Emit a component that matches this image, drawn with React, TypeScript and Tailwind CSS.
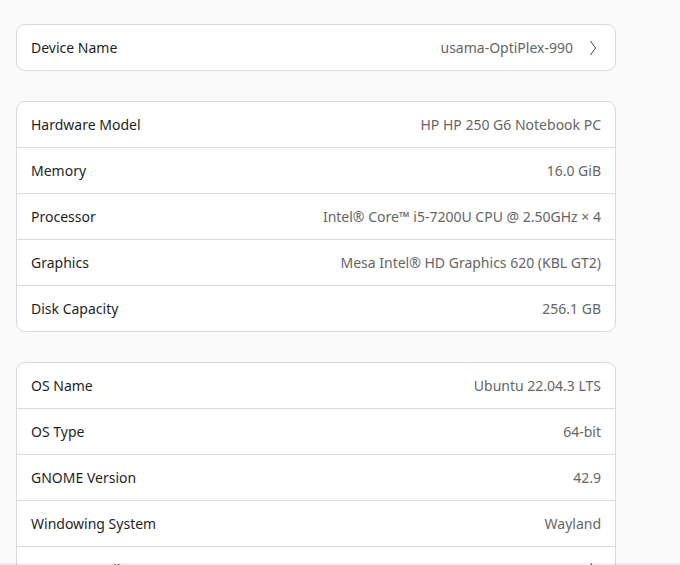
const hardware = [
  ["Hardware Model", "HP HP 250 G6 Notebook PC"],
  ["Memory", "16.0 GiB"],
  ["Processor", "Intel® Core™ i5-7200U CPU @ 2.50GHz × 4"],
  ["Graphics", "Mesa Intel® HD Graphics 620 (KBL GT2)"],
  ["Disk Capacity", "256.1 GB"],
];

const software = [
  ["OS Name", "Ubuntu 22.04.3 LTS"],
  ["OS Type", "64-bit"],
  ["GNOME Version", "42.9"],
  ["Windowing System", "Wayland"],
];

function Chevron() {
  return (
    <svg width="8" height="16" viewBox="0 0 8 16" fill="none" className="text-[#4a4a4a]">
      <path d="M1.5 1 L6.5 8 L1.5 15" stroke="currentColor" strokeWidth="1" />
    </svg>
  );
}

function Row({ label, value, chevron }: { label: string; value?: string; chevron?: boolean }) {
  return (
    <div
      className={`box-content flex h-[45px] items-center justify-between border-t border-[#dadada] pl-[14px] first:border-t-0 ${
        chevron ? "pr-[18px]" : "pr-[14px]"
      }`}
    >
      <span className="text-[#1f1f1f]">{label}</span>
      <div className="flex items-center gap-[16px]">
        {value && <span className="text-[#666666]">{value}</span>}
        {chevron && <Chevron />}
      </div>
    </div>
  );
}

export default function App() {
  return (
    <div
      className="relative h-[565px] w-[680px] overflow-hidden bg-[#fafafa] text-[14px]"
      style={{ fontFamily: '"Noto Sans", "Open Sans", sans-serif' }}
    >
      <div className="flex w-[616px] flex-col gap-[30px] pl-[16px] pt-[24px]">
        <div className="overflow-hidden rounded-[9px] border border-[#d9d9d9] bg-white">
          <Row label="Device Name" value="usama-OptiPlex-990" chevron />
        </div>

        <div className="overflow-hidden rounded-[9px] border border-[#d9d9d9] bg-white">
          {hardware.map(([l, v]) => (
            <Row key={l} label={l} value={v} />
          ))}
        </div>

        <div className="rounded-[9px] border border-[#d9d9d9] bg-white">
          {software.map(([l, v]) => (
            <Row key={l} label={l} value={v} />
          ))}
          <Row label="System Details" chevron />
        </div>
      </div>
      <div className="pointer-events-none absolute bottom-0 left-0 right-0 h-[2px] bg-black/[0.06]" />
    </div>
  );
}
